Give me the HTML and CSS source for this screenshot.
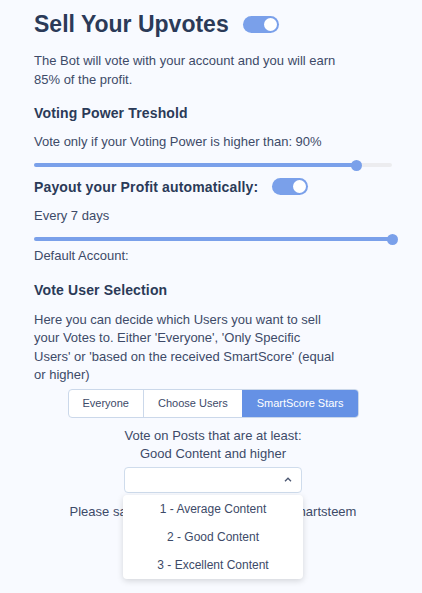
FILE: index.html
```html
<!DOCTYPE html>
<html>
  <head>
    <title>Sell Your Upvotes</title>
    <meta charset="utf-8"/>
    <link rel="stylesheet" href="styles.css">
  </head>
  <body>
    <div class="page">
      <div class="title-row">
        <h1>Sell Your Upvotes</h1>
        <span class="toggle on"><span class="knob"></span></span>
      </div>
      <p class="text intro">The Bot will vote with your account and you will earn 85% of the profit.</p>

      <h3 class="heading vp-head">Voting Power Treshold</h3>
      <p class="text vp-text">Vote only if your Voting Power is higher than: 90%</p>
      <div class="slider vp-slider">
        <div class="track"><div class="fill" style="width: 90%"></div></div>
        <span class="thumb" style="left: 90%"></span>
      </div>

      <div class="heading-row payout-row">
        <h3 class="heading">Payout your Profit automatically:</h3>
        <span class="toggle on"><span class="knob"></span></span>
      </div>
      <p class="text days-text">Every 7 days</p>
      <div class="slider days-slider">
        <div class="track"><div class="fill" style="width: 100%"></div></div>
        <span class="thumb" style="left: 100%"></span>
      </div>
      <p class="text account">Default Account:</p>

      <h3 class="heading sel-head">Vote User Selection</h3>
      <p class="text sel-text">Here you can decide which Users you want to sell your Votes to. Either 'Everyone', 'Only Specific Users' or 'based on the received SmartScore' (equal or higher)</p>

      <div class="center">
        <div class="btn-group">
          <button class="btn">Everyone</button>
          <button class="btn">Choose Users</button>
          <button class="btn active">SmartScore Stars</button>
        </div>
        <p class="text least">Vote on Posts that are at least:<br>Good Content and higher</p>
        <div class="select-wrap">
          <div class="select">
            <svg class="caret" width="8" height="5" viewBox="0 0 8 5"><path d="M1 4.2 L4 1.2 L7 4.2" fill="none" stroke="#4a5670" stroke-width="1.3"/></svg>
          </div>
          <ul class="menu">
            <li>1 - Average Content</li>
            <li>2 - Good Content</li>
            <li>3 - Excellent Content</li>
          </ul>
        </div>
        <p class="text save">Please save your Settings to activate Smartsteem</p>
      </div>
    </div>
  </body>
</html>
```

FILE: styles.css
```css
html, body {height: 100%;}
body {
  margin: 0;
  background: #f8faff;
  color: #3d4a68;
  font-family: "Liberation Sans", Arial, sans-serif;
}

.page {
  padding: 10px 30px 0 34px;
}

.title-row {
  display: flex;
  align-items: center;
  gap: 14px;
  height: 28px;
}
h1 {
  margin: 0;
  font-size: 23px;
  line-height: 28px;
  color: #2b3a58;
}

.toggle {
  display: inline-flex;
  align-items: center;
  justify-content: flex-end;
  width: 36px;
  height: 17px;
  padding: 0 2px;
  box-sizing: border-box;
  border-radius: 9px;
  background: #7aa0ea;
}
.toggle .knob {
  width: 13px;
  height: 13px;
  border-radius: 50%;
  background: #fff;
}

.text {
  margin: 0;
  font-size: 13px;
  line-height: 18.5px;
}
.intro {
  margin-top: 14px;
  max-width: 304px;
}

.heading {
  margin: 0;
  font-size: 14px;
  line-height: 18px;
  color: #2b3a58;
  letter-spacing: 0.15px;
}
.vp-head {margin-top: 15px;}
.vp-text {margin-top: 11px;}

.slider {
  position: relative;
  height: 10px;
  display: flex;
  align-items: center;
}
.track {
  flex: 1;
  height: 4px;
  border-radius: 2px;
  background: #ececef;
}
.fill {
  height: 100%;
  border-radius: 2px;
  background: #7aa0ea;
}
.thumb {
  position: absolute;
  top: 0;
  width: 11px;
  height: 11px;
  margin-left: -5px;
  border-radius: 50%;
  background: #7aa0ea;
}
.vp-slider {margin-top: 8px;}

.heading-row {
  display: flex;
  align-items: center;
  gap: 14px;
  height: 18px;
}
.payout-row {margin-top: 8px;}
.days-text {margin-top: 11px;}
.days-slider {margin-top: 9px;}
.account {margin-top: 3px;}

.sel-head {margin-top: 15px;}
.sel-text {
  margin-top: 12px;
  max-width: 304px;
}

.center {
  display: flex;
  flex-direction: column;
  align-items: center;
  text-align: center;
}

.btn-group {
  display: flex;
  margin-top: 4px;
  border: 1px solid #cbd8ea;
  border-radius: 4px;
  background: #fff;
  overflow: hidden;
}
.btn {
  height: 27px;
  border: none;
  background: transparent;
  color: #3d4a68;
  font-family: inherit;
  font-size: 11px;
  padding: 0 14px;
}
.btn + .btn {border-left: 1px solid #cbd8ea;}
.btn.active {
  background: #6591e5;
  color: #fff;
  border-left-color: #6591e5;
}

.least {margin-top: 9px;}

.select-wrap {
  position: relative;
  margin-top: 3px;
}
.select {
  width: 178px;
  height: 26px;
  box-sizing: border-box;
  display: flex;
  align-items: center;
  justify-content: flex-end;
  padding-right: 9px;
  border: 1px solid #cfdcec;
  border-radius: 4px;
  background: #fff;
}

.menu {
  position: absolute;
  top: 28px;
  left: -1px;
  width: 180px;
  margin: 0;
  padding: 0;
  list-style: none;
  background: #fff;
  border-radius: 4px;
  box-shadow: 0 2px 6px rgba(0,0,0,0.15);
  z-index: 2;
}
.menu li {
  height: 28px;
  line-height: 28px;
  font-size: 12px;
}

.save {margin-top: 10px;}
```
